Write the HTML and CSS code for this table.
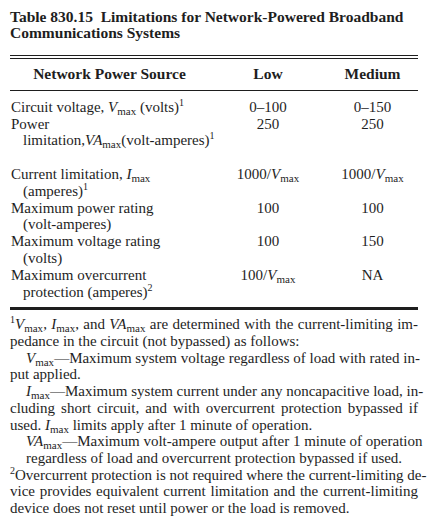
FILE: index.html
```html
<!DOCTYPE html>
<html>
<head>
    <title>Table 830.15</title>
    <link rel="stylesheet" href="styles.css">
</head>
<body>
<div class="page">
    <h1 class="caption">Table 830.15&nbsp; Limitations for Network-Powered Broadband Communications Systems</h1>

    <table class="limits">
        <colgroup>
            <col class="col-name">
            <col class="col-low">
            <col class="col-med">
        </colgroup>
        <thead>
            <tr>
                <th>Network Power Source</th>
                <th>Low</th>
                <th>Medium</th>
            </tr>
        </thead>
        <tbody>
            <tr class="first">
                <td class="name">Circuit voltage, <i>V</i><sub>max</sub> (volts)<sup>1</sup></td>
                <td>0–100</td>
                <td>0–150</td>
            </tr>
            <tr class="spaced">
                <td class="name">Power<br>limitation,<i>VA</i><sub>max</sub>(volt-amperes)<sup>1</sup></td>
                <td>250</td>
                <td>250</td>
            </tr>
            <tr>
                <td class="name">Current limitation, <i>I</i><sub>max</sub><br>(amperes)<sup>1</sup></td>
                <td>1000/<i>V</i><sub>max</sub></td>
                <td>1000/<i>V</i><sub>max</sub></td>
            </tr>
            <tr>
                <td class="name">Maximum power rating<br>(volt-amperes)</td>
                <td>100</td>
                <td>100</td>
            </tr>
            <tr>
                <td class="name">Maximum voltage rating<br>(volts)</td>
                <td>100</td>
                <td>150</td>
            </tr>
            <tr class="last">
                <td class="name">Maximum overcurrent<br>protection (amperes)<sup>2</sup></td>
                <td>100/<i>V</i><sub>max</sub></td>
                <td>NA</td>
            </tr>
        </tbody>
    </table>

    <div class="notes">
        <p>
            <span class="line"><sup>1</sup><i>V</i><sub>max</sub>, <i>I</i><sub>max</sub>, and <i>VA</i><sub>max</sub> are determined with the current-limiting im-</span>
            <span>pedance in the circuit (not bypassed) as follows:</span>
        </p>
        <p class="indent">
            <span class="line"><i>V</i><sub>max</sub>—Maximum system voltage regardless of load with rated in-</span>
            <span>put applied.</span>
        </p>
        <p class="indent">
            <span class="line"><i>I</i><sub>max</sub>—Maximum system current under any noncapacitive load, in-</span>
            <span class="line">cluding short circuit, and with overcurrent protection bypassed if</span>
            <span>used. <i>I</i><sub>max</sub> limits apply after 1 minute of operation.</span>
        </p>
        <p class="inset">
            <span class="line"><i>VA</i><sub>max</sub>—Maximum volt-ampere output after 1 minute of operation</span>
            <span>regardless of load and overcurrent protection bypassed if used.</span>
        </p>
        <p>
            <span class="line"><sup>2</sup>Overcurrent protection is not required where the current-limiting de-</span>
            <span class="line">vice provides equivalent current limitation and the current-limiting</span>
            <span>device does not reset until power or the load is removed.</span>
        </p>
    </div>
</div>
</body>
</html>
```

FILE: styles.css
```css
body {
    margin: 0;
    background-color: #fff;
    color: #1e1e1e;
    font-family: "Liberation Serif", "DejaVu Serif", serif;
    font-size: 15px;
}

.page {
    width: 408px;
    padding: 9px 0 0 10px;
}

.caption {
    margin: 0 0 14px 0;
    font-size: 15.5px;
    line-height: 16px;
    font-weight: bold;
}

.limits {
    width: 408px;
    border-collapse: collapse;
    table-layout: fixed;
    line-height: 16.8px;
}

.col-name {
    width: 199px;
}

.col-low {
    width: 118px;
}

.col-med {
    width: 91px;
}

.limits thead tr {
    border-top: 4px double #1e1e1e;
    border-bottom: 1px solid #1e1e1e;
}

.limits th {
    padding: 7px 0 7px 0;
    font-size: 15.5px;
    font-weight: bold;
    text-align: center;
}

.limits td {
    padding: 0;
    vertical-align: top;
    text-align: center;
    white-space: nowrap;
}

.limits td.name {
    text-align: left;
    padding-left: 13px;
    text-indent: -12px;
}

.limits tr.first td {
    padding-top: 8px;
}

.limits tr.spaced td {
    padding-bottom: 16.8px;
}

.limits tr.last td {
    padding-bottom: 7px;
}

.limits tbody tr.last {
    border-bottom: 3px solid #1e1e1e;
}

sub {
    font-size: 11px;
    line-height: 0;
    vertical-align: -3px;
}

sup {
    font-size: 10px;
    line-height: 0;
    vertical-align: 6px;
}

.notes {
    padding-top: 6px;
    line-height: 16.7px;
}

.notes p {
    margin: 0;
}

.notes span {
    display: block;
    white-space: nowrap;
}

.notes .line {
    text-align: justify;
    text-align-last: justify;
}

.notes .indent span:first-child {
    text-indent: 16px;
}

.notes .inset {
    padding-left: 16px;
}
```
